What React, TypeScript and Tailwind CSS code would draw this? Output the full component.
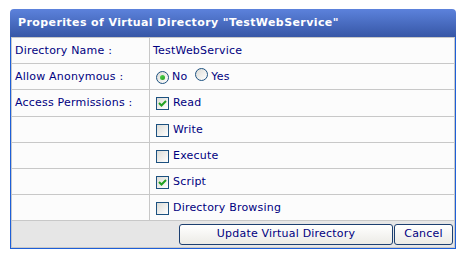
import React from "react";

const rows = [
  { label: "Directory Name :", kind: "text" as const },
  { label: "Allow Anonymous :", kind: "radio" as const },
  { label: "Access Permissions :", kind: "check" as const, text: "Read", checked: true },
  { label: "", kind: "check" as const, text: "Write", checked: false },
  { label: "", kind: "check" as const, text: "Execute", checked: false },
  { label: "", kind: "check" as const, text: "Script", checked: true },
  { label: "", kind: "check" as const, text: "Directory Browsing", checked: false },
];

function Radio({ on }: { on: boolean }) {
  return (
    <span className="relative inline-flex h-[13px] w-[13px] shrink-0 items-center justify-center rounded-full border border-[#1c5180] bg-gradient-to-br from-[#dcdcd7] to-white">
      {on && (
        <span className="h-[5px] w-[5px] rounded-full bg-gradient-to-br from-[#55d551] to-[#21a121]" />
      )}
    </span>
  );
}

function Check({ on }: { on: boolean }) {
  return (
    <span className="inline-flex h-[13px] w-[13px] shrink-0 items-center justify-center border border-[#1c5180] bg-gradient-to-br from-[#dcdcd7] to-white">
      {on && (
        <svg width="9" height="9" viewBox="0 0 9 9" aria-hidden="true">
          <path d="M1 4l2.5 2.5L8 2" stroke="#21a121" strokeWidth="2" fill="none" />
        </svg>
      )}
    </span>
  );
}

export default function App() {
  return (
    <div className="h-[261px] w-[466px] bg-white pl-[10px] pt-[9px] font-['DejaVu_Sans',sans-serif] text-[11px] tracking-[0.2px] text-[#000080]">
      <div className="w-[446px]">
        {/* title bar */}
        <div className="flex h-[28px] items-center rounded-t-[4px] bg-gradient-to-b from-[#5c82dc] to-[#3757a6] pl-[8px] text-[11px] font-bold tracking-[0.4px] text-white">
          Properites of Virtual Directory "TestWebService"
        </div>
        <div className="border-x border-b border-[#1e5fd8]">
          <div className="border border-[#c8c8c8]">
            {rows.map((r, i) => (
              <div
                key={i}
                className={`flex border-b border-[#c8c8c8] bg-[#fcfcfc] ${i === 2 ? "h-[27px]" : "h-[26px]"}`}
              >
                <div className="flex w-[138px] items-center border-r border-[#c8c8c8] pl-[3px] pt-[1px]">
                  {r.label}
                </div>
                <div className="flex flex-1 items-center pl-[3px] pt-[1px]">
                  {r.kind === "text" && <span>TestWebService</span>}
                  {r.kind === "radio" && (
                    <div className="flex items-center pl-[3px]">
                      <Radio on />
                      <span className="ml-[3px]">No</span>
                      <span className="ml-[8px]">
                        <Radio on={false} />
                      </span>
                      <span className="ml-[3px]">Yes</span>
                    </div>
                  )}
                  {r.kind === "check" && (
                    <div className="flex items-center pl-[3px]">
                      <Check on={r.checked} />
                      <span className="ml-[4px]">{r.text}</span>
                    </div>
                  )}
                </div>
              </div>
            ))}
            <div className="flex h-[26px] items-center justify-end gap-[1px] bg-[#e6e6e6] pr-[1px]">
              <button className="h-[21px] w-[214px] rounded-[3px] border border-[#1c3f70] bg-gradient-to-b from-white to-[#ecebe6] text-[11px] tracking-[0.2px] text-[#000080]">
                Update Virtual Directory
              </button>
              <button className="h-[21px] w-[59px] rounded-[3px] border border-[#1c3f70] bg-gradient-to-b from-white to-[#ecebe6] text-[11px] tracking-[0.2px] text-[#000080]">
                Cancel
              </button>
            </div>
          </div>
        </div>
      </div>
    </div>
  );
}
